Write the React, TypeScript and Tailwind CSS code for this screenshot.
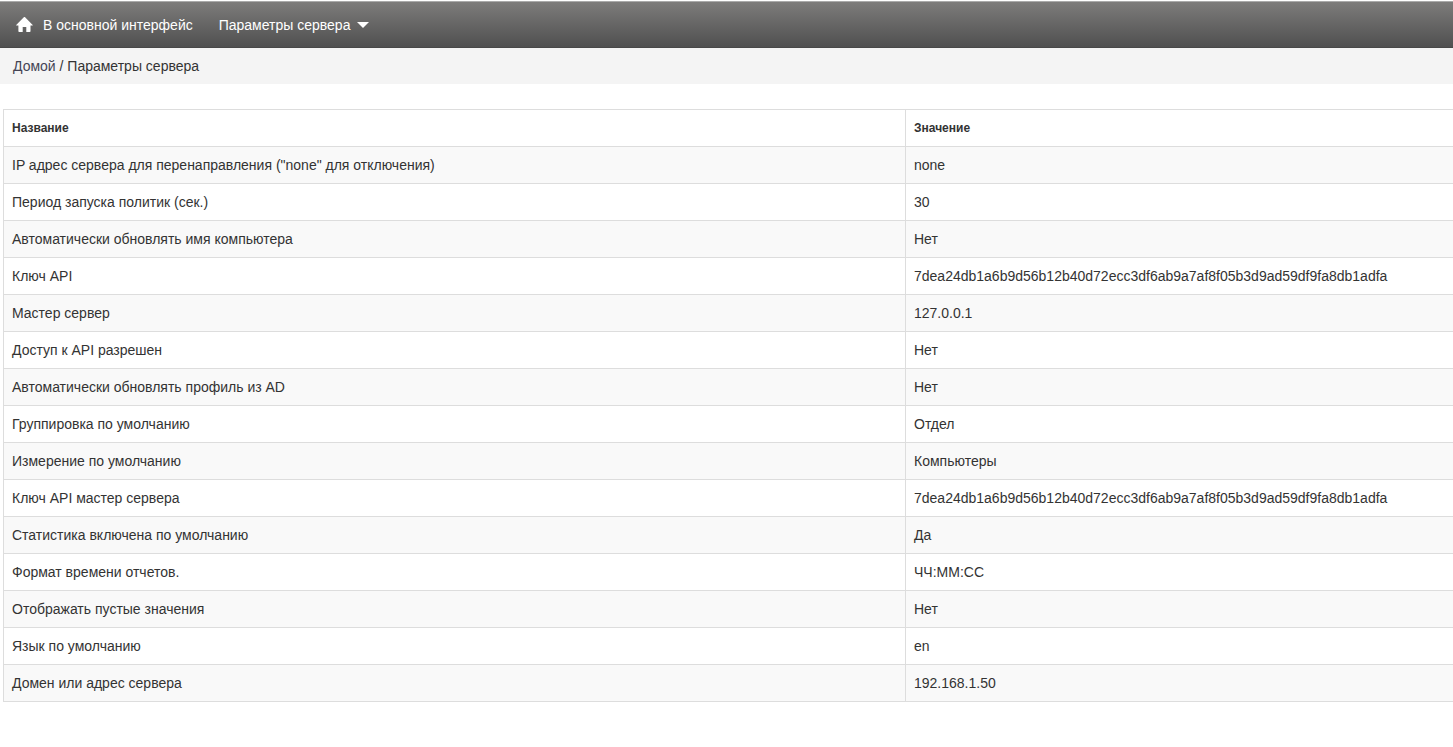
const parameters: [string, string][] = [
  ['IP адрес сервера для перенаправления ("none" для отключения)', 'none'],
  ['Период запуска политик (сек.)', '30'],
  ['Автоматически обновлять имя компьютера', 'Нет'],
  ['Ключ API', '7dea24db1a6b9d56b12b40d72ecc3df6ab9a7af8f05b3d9ad59df9fa8db1adfa'],
  ['Мастер сервер', '127.0.0.1'],
  ['Доступ к API разрешен', 'Нет'],
  ['Автоматически обновлять профиль из AD', 'Нет'],
  ['Группировка по умолчанию', 'Отдел'],
  ['Измерение по умолчанию', 'Компьютеры'],
  ['Ключ API мастер сервера', '7dea24db1a6b9d56b12b40d72ecc3df6ab9a7af8f05b3d9ad59df9fa8db1adfa'],
  ['Статистика включена по умолчанию', 'Да'],
  ['Формат времени отчетов.', 'ЧЧ:ММ:СС'],
  ['Отображать пустые значения', 'Нет'],
  ['Язык по умолчанию', 'en'],
  ['Домен или адрес сервера', '192.168.1.50'],
];

function HomeIcon() {
  return (
    <svg width="17" height="15" viewBox="0 0 17 15" fill="currentColor" aria-hidden="true">
      <path d="M7.8.3a.9.9 0 0 1 1.3 0l7.6 7.6c.2.3.1.6-.3.6H14.5V14.2a.8.8 0 0 1-.8.8H10.3V10H6.7V15H3.2a.8.8 0 0 1-.8-.8V8.5H.5C.1 8.5 0 8.2.2 7.9Z" />
    </svg>
  );
}

function CaretIcon() {
  return (
    <svg width="12" height="6" viewBox="0 0 12 6" fill="currentColor" aria-hidden="true">
      <path d="M0 0H12L6 6Z" />
    </svg>
  );
}

export default function App() {
  return (
    <div className="min-h-screen overflow-x-hidden bg-white font-['Liberation_Sans',Arial,sans-serif] text-sm leading-5 text-[#333333]">
      <header className="pt-px">
        <nav className="flex h-[47px] items-center border-t border-b border-t-[#aaaaaa] border-b-[#484848] bg-linear-to-b from-[#7d7c7b] to-[#505050] px-4 text-white">
          <a href="#main" className="flex items-center gap-[10px]">
            <HomeIcon />
            В основной интерфейс
          </a>
          <button type="button" className="ml-[26px] flex items-center gap-[7px]">
            Параметры сервера
            <CaretIcon />
          </button>
        </nav>
      </header>
      <nav aria-label="Навигация" className="bg-[#f4f4f4] px-[13px] py-2">
        <a href="#home" className="text-[#444455]">Домой</a> / <span>Параметры сервера</span>
      </nav>
      <main id="main" className="pt-[25px] pl-[3px]">
        <table className="w-full table-fixed border-separate border-spacing-0 border-t border-l border-[#dddddd] text-left">
          <thead>
            <tr>
              <th className="w-[62.25%] border-r border-b border-[#dddddd] p-2 text-xs leading-5 font-bold">Название</th>
              <th className="border-b border-[#dddddd] p-2 text-xs leading-5 font-bold">Значение</th>
            </tr>
          </thead>
          <tbody>
            {parameters.map(([name, value]) => (
              <tr key={name} className="odd:bg-[#f9f9f9]">
                <td className="border-r border-b border-[#dddddd] p-2">{name}</td>
                <td className="border-b border-[#dddddd] p-2">{value}</td>
              </tr>
            ))}
          </tbody>
        </table>
      </main>
    </div>
  );
}
